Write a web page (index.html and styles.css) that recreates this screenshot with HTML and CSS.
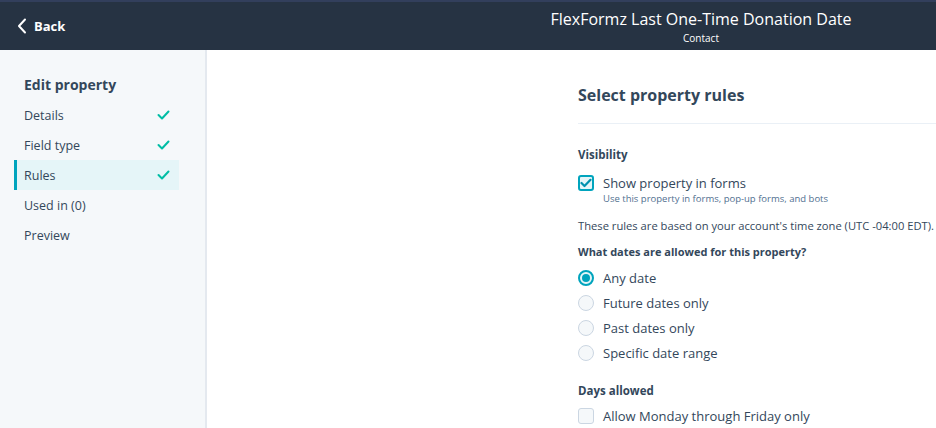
FILE: index.html
```html
<!DOCTYPE html>
<html lang="en">
<head>
<meta charset="utf-8">
<title>Edit property</title>
<link rel="stylesheet" href="styles.css">
</head>
<body>
<header class="topbar">
  <a class="back" href="#">
    <svg class="back-icon" width="10" height="16" viewBox="0 0 10 16"><path d="M8 1.5 L2 8 L8 14.5" fill="none" stroke="#fff" stroke-width="2" stroke-linecap="round" stroke-linejoin="round"/></svg>
    <span>Back</span>
  </a>
  <div class="title-block">
    <h1 class="title">FlexFormz Last One-Time Donation Date</h1>
    <div class="subtitle">Contact</div>
  </div>
</header>
<div class="layout">
  <nav class="sidebar">
    <h2 class="side-title">Edit property</h2>
    <ul class="steps">
      <li class="step">Details<svg class="tick" width="13" height="10" viewBox="0 0 13 10"><path d="M1.5 5 L5 8.5 L11.5 1.5" fill="none" stroke="#00bda5" stroke-width="2" stroke-linecap="round" stroke-linejoin="round"/></svg></li>
      <li class="step">Field type<svg class="tick" width="13" height="10" viewBox="0 0 13 10"><path d="M1.5 5 L5 8.5 L11.5 1.5" fill="none" stroke="#00bda5" stroke-width="2" stroke-linecap="round" stroke-linejoin="round"/></svg></li>
      <li class="step active">Rules<svg class="tick" width="13" height="10" viewBox="0 0 13 10"><path d="M1.5 5 L5 8.5 L11.5 1.5" fill="none" stroke="#00bda5" stroke-width="2" stroke-linecap="round" stroke-linejoin="round"/></svg></li>
      <li class="step">Used in (0)</li>
      <li class="step">Preview</li>
    </ul>
  </nav>
  <main class="main">
    <section class="panel">
      <h2 class="panel-title">Select property rules</h2>
      <hr class="divider">
      <h3 class="label">Visibility</h3>
      <div class="option check-row">
        <span class="box checked"><svg width="12" height="10" viewBox="0 0 12 10"><path d="M1.5 5 L4.5 8 L10.5 1.8" fill="none" stroke="#0091ae" stroke-width="2.2" stroke-linecap="round" stroke-linejoin="round"/></svg></span>
        <div>
          <div class="opt-text">Show property in forms</div>
          <div class="help">Use this property in forms, pop-up forms, and bots</div>
        </div>
      </div>
      <p class="note">These rules are based on your account's time zone (UTC -04:00 EDT).</p>
      <h3 class="label q">What dates are allowed for this property?</h3>
      <div class="radios">
        <div class="option"><span class="radio on"></span><span class="opt-text">Any date</span></div>
        <div class="option"><span class="radio"></span><span class="opt-text">Future dates only</span></div>
        <div class="option"><span class="radio"></span><span class="opt-text">Past dates only</span></div>
        <div class="option"><span class="radio"></span><span class="opt-text">Specific date range</span></div>
      </div>
      <h3 class="label days">Days allowed</h3>
      <div class="option"><span class="box"></span><span class="opt-text">Allow Monday through Friday only</span></div>
    </section>
  </main>
</div>
</body>
</html>
```
FILE: styles.css
```css
* { box-sizing: border-box; }
html, body { margin: 0; padding: 0; }
body {
  width: 936px;
  height: 428px;
  overflow: hidden;
  font-family: "Open Sans", "Liberation Sans", sans-serif;
  color: #33475b;
  background: #fff;
}
.topbar {
  height: 50px;
  background: #263343;
  border-top: 2px solid #323f5c;
  display: flex;
  align-items: center;
  color: #fff;
}
.back {
  display: flex;
  align-items: center;
  gap: 7px;
  padding-left: 17px;
  color: #fff;
  text-decoration: none;
  font-weight: 700;
  font-size: 13px;
  width: 466px;
  flex: none;
}
.back-icon { display: block; }
.title-block {
  flex: 1;
  text-align: center;
  padding-top: 2px;
}
.title {
  margin: 0;
  font-size: 16px;
  font-weight: 400;
  line-height: 20px;
}
.subtitle {
  font-size: 10px;
  line-height: 14px;
  margin-top: 2px;
}
.layout {
  display: flex;
  height: 378px;
}
.sidebar {
  flex: none;
  width: 207px;
  background: #f5f8fa;
  border-right: 2px solid #e4e9ef;
  padding: 26px 26px 0 14px;
}
.side-title {
  margin: 0 0 6px 10px;
  font-size: 14px;
  font-weight: 700;
  line-height: 18px;
}
.steps {
  list-style: none;
  margin: 0;
  padding: 0;
}
.step {
  height: 30px;
  display: flex;
  align-items: center;
  justify-content: space-between;
  padding: 0 9px 0 7px;
  font-size: 12.5px;
  border-left: 3px solid transparent;
}
.step.active {
  background: #e5f5f8;
  border-left-color: #00a4bd;
}
.tick { display: block; }
.main {
  flex: 1;
  min-width: 0;
  padding-left: 371px;
}
.panel { padding-top: 34px; }
.panel-title {
  margin: 0;
  font-size: 16px;
  font-weight: 700;
  line-height: 22px;
}
.divider {
  border: 0;
  border-top: 1px solid #eaf0f6;
  margin: 17px 0 23px;
}
.label {
  margin: 0;
  font-size: 11.5px;
  font-weight: 700;
  line-height: 16px;
}
.option {
  display: flex;
  align-items: center;
  gap: 9px;
  height: 25px;
}
.check-row {
  align-items: flex-start;
  height: auto;
  margin-top: 11px;
}
.opt-text {
  font-size: 13px;
  line-height: 18px;
}
.help {
  font-size: 9.5px;
  line-height: 13px;
  color: #516f90;
}
.box {
  width: 16px;
  height: 16px;
  border: 1px solid #cbd6e2;
  border-radius: 3px;
  background: #f5f8fa;
  display: flex;
  align-items: center;
  justify-content: center;
  flex: none;
}
.box.checked {
  border: 2px solid #00a4bd;
  background: #e5f5f8;
  margin-top: 1px;
}
.radio {
  width: 16px;
  height: 16px;
  border-radius: 50%;
  border: 1px solid #cbd6e2;
  background: #f5f8fa;
  flex: none;
  display: flex;
  align-items: center;
  justify-content: center;
}
.radio.on {
  border: 2px solid #00a4bd;
  background: #e5f5f8;
}
.radio.on::after {
  content: "";
  width: 8px;
  height: 8px;
  border-radius: 50%;
  background: #00a4bd;
}
.note {
  margin: 13px 0 0;
  font-size: 11.2px;
  line-height: 16px;
  white-space: nowrap;
}
.label.q { margin-top: 10px; font-size: 11px; }
.radios { margin-top: 5px; }
.label.days { margin-top: 18px; margin-bottom: 4px; }
```
